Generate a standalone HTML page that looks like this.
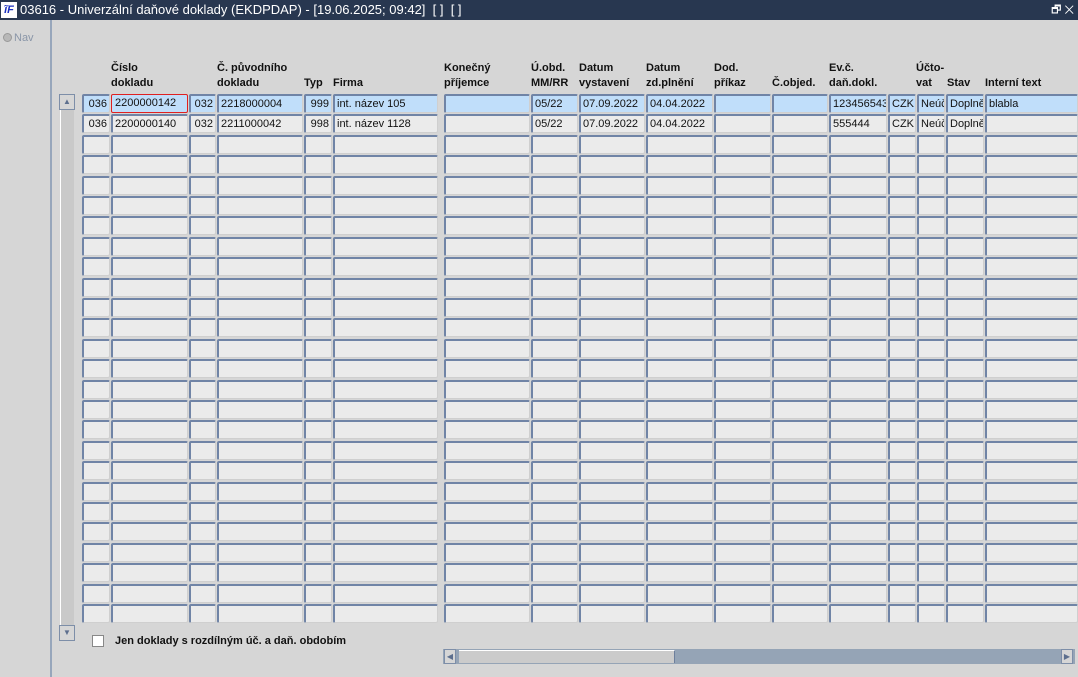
<!DOCTYPE html>
<html><head><meta charset="utf-8"><style>
*{margin:0;padding:0;box-sizing:border-box}
body{width:1078px;height:677px;overflow:hidden;background:#d6d6d6;font-family:"Liberation Sans",Arial,sans-serif;position:relative}
.t{position:absolute;left:0;top:0;width:1078px;height:20px;background:#283750;color:#fff;font-size:13px;line-height:20px;padding-left:20px;white-space:nowrap}
.ic{position:absolute;left:1px;top:2px;width:16px;height:16px;background:#fff;color:#1a2fc0;font:bold italic 11px/16px "Liberation Sans",sans-serif;text-align:center}
.lp{position:absolute;left:0;top:20px;width:52px;height:657px;border-right:2px solid #97a6bb;background:#d6d6d6}
.nav{position:absolute;left:3px;top:12px;font-size:11px;color:#8a96a8}
.nav b{display:inline-block;width:9px;height:9px;border-radius:50%;background:#b8b8b8;border:1px solid #999;vertical-align:-1px;margin-right:2px}
.h{position:absolute;font-size:11px;font-weight:bold;line-height:15px;color:#111;white-space:nowrap}
.c{position:absolute;height:19px;background:#ebebeb;border:1px solid #cfcfcf;border-top:2px solid #7084a6;border-left:2px solid #7084a6;border-radius:2px;font-size:11px;line-height:16px;padding:0 2px;white-space:nowrap;overflow:hidden;color:#111}
.s{background:#c0defa}
.r{text-align:right}
.vs{position:absolute;left:60px;top:94px;width:14px;height:546px;background:#c9c9c9;border-left:1px solid #fff}
.vb{position:absolute;left:59px;width:16px;height:16px;background:#d6d6d6;border:1px solid #7d8ea8;font-size:8px;line-height:14px;text-align:center;color:#5d6f8e}
.hs{position:absolute;left:443px;top:649px;width:632px;height:15px;background:#95a4b6}
.ht{position:absolute;left:459px;top:650px;width:216px;height:13px;background:#cbcbcb;border-top:1px solid #fff;border-right:1px solid #6d7f9c}
.hb{position:absolute;top:649px;width:12px;height:15px;background:#d6d6d6;border:1px solid #7d8ea8;font-size:8px;line-height:13px;text-align:center;color:#5d6f8e}
</style></head><body>
<div class="t"><div class="ic">ĩF</div>03616 - Univerzální daňové doklady (EKDPDAP) - [19.06.2025; 09:42]&nbsp; [ ]&nbsp; [ ]<span style="position:absolute;right:4px;top:0;font-size:11px">🗗 ✕</span></div>
<div class="lp"><div class="nav"><b></b>Nav</div></div>
<div class="h" style="left:111px;top:61px">Číslo<br>dokladu</div>
<div class="h" style="left:217px;top:61px">Č. původního<br>dokladu</div>
<div class="h" style="left:304px;top:76px">Typ</div>
<div class="h" style="left:333px;top:76px">Firma</div>
<div class="h" style="left:444px;top:61px">Konečný<br>příjemce</div>
<div class="h" style="left:531px;top:61px">Ú.obd.<br>MM/RR</div>
<div class="h" style="left:579px;top:61px">Datum<br>vystavení</div>
<div class="h" style="left:646px;top:61px">Datum<br>zd.plnění</div>
<div class="h" style="left:714px;top:61px">Dod.<br>příkaz</div>
<div class="h" style="left:772px;top:76px">Č.objed.</div>
<div class="h" style="left:829px;top:61px">Ev.č.<br>daň.dokl.</div>
<div class="h" style="left:916px;top:61px">Účto-<br>vat</div>
<div class="h" style="left:947px;top:76px">Stav</div>
<div class="h" style="left:985px;top:76px">Interní text</div>
<div class="vs"></div>
<div class="vb" style="top:94px">▲</div>
<div class="vb" style="top:625px">▼</div>
<div id="g"></div>
<div style="position:absolute;left:92px;top:635px;width:12px;height:12px;background:#fff;border:1px solid #888"></div>
<div class="h" style="left:115px;top:634px">Jen doklady s rozdílným úč. a daň. obdobím</div>
<div class="hs"></div><div class="ht"></div>
<div class="hb" style="left:444px">◀</div><div class="hb" style="left:1061px">▶</div>
<script>
var C=[[82,28],[111,77],[189,27],[217,86],[304,28],[333,105],[444,86],[531,47],[579,66],[646,67],[714,57],[772,56],[829,58],[888,28],[917,28],[946,38],[985,93]];
var R=["036","2200000142","032","2218000004","999","int. název 105","","05/22","07.09.2022","04.04.2022","","","123456543","CZK","Neúč","Doplně","blabla"];
var R2=["036","2200000140","032","2211000042","998","int. název 1128","","05/22","07.09.2022","04.04.2022","","","555444","CZK","Neúč","Doplně",""];
var RA={0:1,2:1,4:1};var h="";
for(var r=0;r<26;r++){var y=Math.round(94+r*20.4);for(var i=0;i<C.length;i++){var t=r==0?R[i]:r==1?R2[i]:"";var cls="c"+(r==0&&i!=1?" s":"")+(RA[i]?" r":"");var st="left:"+C[i][0]+"px;top:"+y+"px;width:"+C[i][1]+"px;";if(r==0&&i==1)st+="border:1px solid #e02020;background:#c0defa;line-height:17px;padding-left:3px;";h+='<div class="'+cls+'" style="'+st+'">'+t+'</div>';}}
document.getElementById("g").innerHTML=h;
</script>
</body></html>
